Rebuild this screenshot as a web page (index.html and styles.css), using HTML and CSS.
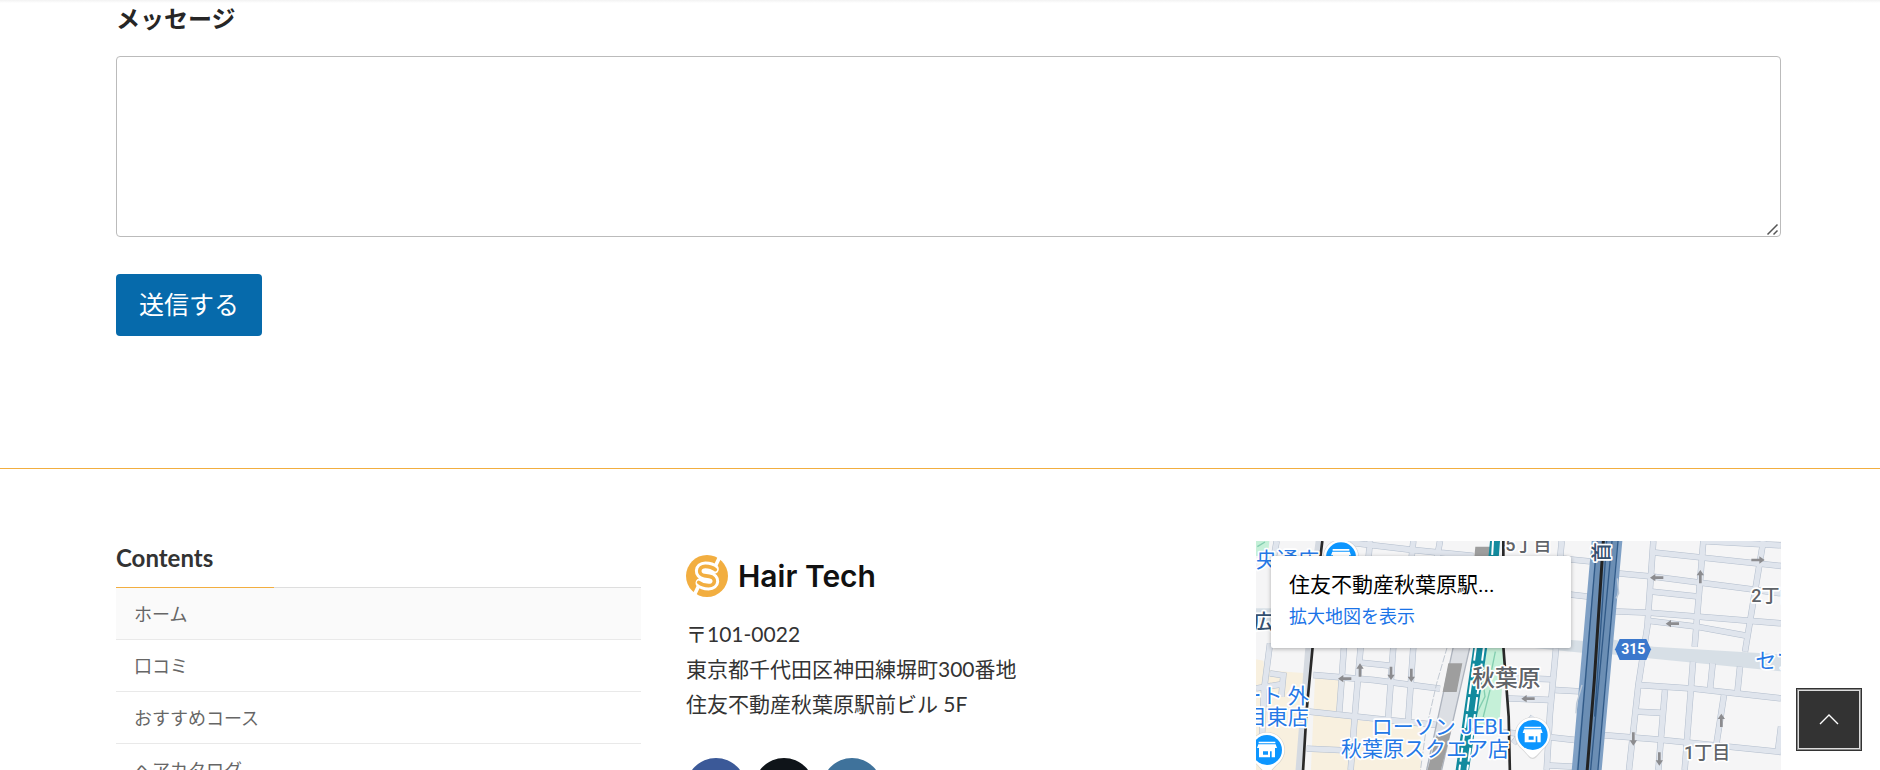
FILE: index.html
```html
<!DOCTYPE html>
<html lang="ja">
<head>
<meta charset="utf-8">
<meta name="viewport" content="width=device-width, initial-scale=1">
<title>Hair Tech</title>
<link rel="stylesheet" href="styles.css">
</head>
<body>
<main class="wrap">
  <form class="contact">
    <label class="contact-label" for="message">メッセージ</label>
    <textarea class="contact-text" id="message" name="message"></textarea>
    <button class="contact-send" type="button">送信する</button>
  </form>
</main>
<footer class="footer">
  <div class="wrap footer-cols">
    <section>
      <h2 class="menu-title">Contents</h2>
      <nav>
        <ul class="menu">
          <li><a class="is-current" href="#">ホーム</a></li>
          <li><a href="#">口コミ</a></li>
          <li><a href="#">おすすめコース</a></li>
          <li><a href="#">ヘアカタログ</a></li>
        </ul>
      </nav>
    </section>
    <section class="about">
      <a class="logo" href="#">
        <svg width="42" height="42" viewBox="0 0 126 126" aria-hidden="true">
          <circle cx="63" cy="63" r="63" fill="#f2ae40"/>
          <g fill="none" stroke-linecap="round" stroke-linejoin="round">
            <path d="M101 6L88 34M38 92L25 120" stroke="#fff" stroke-width="11"/>
            <path d="M84 42C76 34 66 34 58 34C36 34 36 60 55 62L70 64C91 67 90 92 68 92C58 92 48 90 43 84" stroke="#fff" stroke-width="29"/>
            <path d="M88 44C76 34 66 34 58 34C36 34 36 60 55 62L70 64C91 67 90 92 68 92C58 92 48 90 38 82" stroke="#f2ae40" stroke-width="11"/>
          </g>
        </svg>
        <span>Hair Tech</span>
      </a>
      <address class="address">〒101-0022<br>東京都千代田区神田練塀町300番地<br>住友不動産秋葉原駅前ビル 5F</address>
      <div class="social">
        <a class="facebook" href="#" aria-label="Facebook"></a>
        <a class="x" href="#" aria-label="X"></a>
        <a class="instagram" href="#" aria-label="Instagram"></a>
      </div>
    </section>
    <section class="map">
      <svg class="map-art" viewBox="48 33 1575 1200" role="img" aria-label="地図">
        <defs>
          <g id="pin">
            <path d="M0 72 C-12 72 -20 52 -38 38 A54 54 0 1 1 38 38 C20 52 12 72 0 72Z" fill="#bbb" opacity=".5"/>
            <path d="M0 68 C-12 66 -20 50 -37 36 A52 52 0 1 1 37 36 C20 50 12 66 0 68Z" fill="#fff"/>
            <circle r="45" fill="#0d96ff"/>
            <path d="M-25 -25H25V-20H-25ZM-26 -17H26L30 -6H-30ZM-24 -6H24V22H-24ZM-12 4V14H3V4ZM9 4V22H14V4Z" fill="#fff" fill-rule="evenodd"/>
          </g>
          <path id="arrow" d="M-20 0L-4 -11V-4H20V4H-4V11Z" fill="#8c8c8f"/>
          <g id="roads">
            <path d="M110 33L100 90M390 33L385 90M330 38L520 60L700 78M520 33L514 90M600 33L590 90"/>
            <path d="M90 340L72 480L66 620M48 475L130 462M90 430L130 436L124 500"/>
            <path d="M220 435L400 450L600 476M190 543L400 565L560 582L640 590M200 656L335 662"/>
            <path d="M312 350L298 545M362 350L345 550L332 720M460 350L444 570M520 350L504 580M362 398L450 407"/>
            <path d="M965 33L960 90M960 85L1050 94M960 190L1045 200M805 443L940 448M800 505L930 510M946 480L1020 484M780 605L1005 630M920 706L1000 710M880 560L820 640"/>
            <path d="M948 355L930 550L920 720"/>
            <path d="M1240 33L1222 290L1195 465L1167 720M1390 33L1364 350M1359 395L1334 720M1570 33L1515 365M1500 410L1492 490M1418 400L1410 480M1452 495L1428 650M1275 480L1255 720M1623 590L1614 662"/>
            <path d="M1390 33L1623 46M1240 67L1623 108M1135 130L1240 140L1380 158L1520 176L1623 190M1235 185L1370 199M1125 244L1225 248L1623 280M1222 272L1370 290L1518 317"/>
            <path d="M1195 465L1360 476L1623 505M1190 545L1270 549M1085 615L1250 628L1623 666"/>
          </g>
        </defs>
        <rect x="48" y="33" width="1575" height="1200" fill="#f5f5f6"/>
        <path d="M48 388L70 392L74 420L200 430L180 1233H48ZM225 445L315 452L300 560L345 570L545 585L530 1233H190Z" fill="#f8f0df"/>
        <path d="M48 33H88L84 78H48ZM742 350L795 355L778 585H700Z" fill="#c5f0d8"/>
        <path d="M766 365L755 420L730 460L735 500L705 560M750 480L730 560L755 585M52 50L75 36" fill="none" stroke="#83ceb0" stroke-width="4"/>
        <path d="M48 235H100V275H48ZM860 319L1040 334V370L860 352ZM1110 327L1240 350L1623 373V424L1240 386L1105 372Z" fill="#d7dfe6"/>
        <use href="#roads" fill="none" stroke="#b2bdcc" stroke-width="19"/>
        <use href="#roads" fill="none" stroke="#e0e5ed" stroke-width="16"/>
        <path d="M238 33L229 100M208 340L176 740" fill="none" stroke="#d5dae1" stroke-width="22"/>
        <path d="M247 33L240 90M218 350L200 540L188 740M790 33L790 350L806 560L810 740" fill="none" stroke="#292929" stroke-width="8"/>
        <path d="M622 350L590 460L558 600L540 730M648 350L605 520L560 720" fill="none" stroke="#c2c9d2" stroke-width="3" stroke-dasharray="22 5"/>
        <path d="M640 350H690L605 720H560Z" fill="#dcdfe4"/>
        <path d="M690 350L605 720M640 350L560 720" stroke="#aeb4be" stroke-width="4"/>
        <path d="M706 50H750V80H703ZM625 400H667L650 486H608ZM592 608H632L600 730H560Z" fill="#9e9e9e"/>
        <path d="M750 33H780L776 85H745ZM700 350H742L687 720H647Z" fill="#128b9e"/>
        <path d="M759 33L756 85M708 350L658 720M732 350L682 720" stroke="#fff" stroke-width="6" stroke-dasharray="42 9"/>
        <path d="M1055 33H1147L1085 720L1081 780H990Z" fill="#7fa0c5"/>
        <path d="M1070 33H1132L1070 760H1006Z" fill="#6b8eb4"/>
        <path d="M1071 33L1012 740M1100 33L1064 560M1116 33L1050 740M1134 33L1072 740" stroke="#315a88" stroke-width="4" fill="none"/>
        <path d="M1090 33L1063 450L1040 740" stroke="#222" stroke-width="9" fill="none"/>
        <path d="M1132 145L1136 190L1128 205M1026 465L1010 520L1008 550" fill="none" stroke="#bcc9d8" stroke-width="4"/>
        <use href="#arrow" x="314" y="446"/>
        <use href="#arrow" x="864" y="506"/>
        <use href="#arrow" x="1250" y="143"/>
        <use href="#arrow" x="1297" y="281"/>
        <use href="#arrow" transform="translate(360 420) rotate(90)"/>
        <use href="#arrow" transform="translate(453 430) rotate(-90)"/>
        <use href="#arrow" transform="translate(514 436) rotate(-90)"/>
        <use href="#arrow" transform="translate(1554 90) rotate(180)"/>
        <use href="#arrow" transform="translate(1381 140) rotate(90)"/>
        <use href="#arrow" transform="translate(1444 571) rotate(90)"/>
        <use href="#arrow" transform="translate(1180 627) rotate(-90)"/>
        <use href="#arrow" transform="translate(1258 687) rotate(-90)"/>
        <g class="map-area">
          <text x="796" y="63" font-size="54">5丁目</text>
          <text x="1534" y="217" font-size="54">2丁目</text>
          <text x="1332" y="687" font-size="54">1丁目</text>
          <text x="697" y="468" font-size="68">秋葉原</text>
        </g>
        <text class="map-road" x="40" y="298" font-size="60">広</text>
        <text class="map-road" font-size="60" transform="translate(1107 97) rotate(-90)">首</text>
        <g class="map-shop" font-size="63">
          <text x="48" y="112">央通店</text>
          <text x="206" y="518" text-anchor="end">ート 外</text>
          <text x="206" y="583" text-anchor="end">目東店</text>
          <text x="807" y="612" text-anchor="end">ローソン JEBL</text>
          <text x="807" y="677" text-anchor="end">秋葉原スクエア店</text>
          <text x="1546" y="414">セブン</text>
        </g>
        <use href="#pin" x="303" y="82"/>
        <use href="#pin" x="81" y="660"/>
        <use href="#pin" x="878" y="615"/>
        <path d="M1125 358L1139 327H1219L1233 358L1219 390H1139Z" fill="#3b78cc"/>
        <text class="map-route" x="1180" y="373" font-size="42" text-anchor="middle">315</text>
      </svg>
      <div class="map-card">
        <div class="map-place">住友不動産秋葉原駅...</div>
        <a class="map-link" href="#">拡大地図を表示</a>
      </div>
    </section>
  </div>
</footer>
<button class="to-top" type="button" aria-label="ページの先頭へ">
  <svg width="20" height="12" viewBox="0 0 20 12" aria-hidden="true"><path d="M1 10L10 1L19 10" fill="none" stroke="#fff" stroke-width="1.4"/></svg>
</button>
</body>
</html>
```
FILE: styles.css
```css
* {
  box-sizing: border-box;
}

body {
  margin: 0;
  height: 100vh;
  overflow: hidden;
  background: linear-gradient(#f2f2f2, #fff 3px);
  color: #333;
  font-family: Lato, "Noto Sans CJK JP", sans-serif;
  font-size: 21px;
}

a {
  text-decoration: none;
}

.wrap {
  padding: 0 99px 0 116px;
}

.contact {
  display: flex;
  flex-direction: column;
  align-items: flex-start;
  padding-bottom: 132px;
}

.contact-label {
  margin-bottom: 18px;
  color: #262626;
  font-size: 24px;
  font-weight: 700;
  line-height: 38px;
}

.contact-text {
  width: 100%;
  height: 181px;
  margin-bottom: 37px;
  padding: 8px;
  border: 1px solid #bbb;
  border-radius: 4px;
  background: #fff;
  font: inherit;
  resize: vertical;
}

.contact-text::-webkit-resizer {
  background: url("data:image/svg+xml,%3Csvg xmlns='http://www.w3.org/2000/svg' width='15' height='15'%3E%3Cpath d='M2.5 13.5L12.5 3.5M8.500 13.5L12.5 9.5' stroke='%23555' stroke-width='1.5'/%3E%3C/svg%3E") no-repeat;
}

.contact-send {
  height: 62px;
  padding: 0 23px 4px;
  border: 0;
  border-radius: 4px;
  background: #066aab;
  color: #fff;
  font-family: inherit;
  font-size: 25px;
}

.footer {
  border-top: 1px solid #f2ae40;
  padding-top: 72px;
}

.footer-cols {
  display: grid;
  grid-template-columns: repeat(3, 1fr);
  gap: 45px;
}

.menu-title {
  position: relative;
  margin: 0;
  padding-bottom: 12px;
  border-bottom: 1px solid #dedede;
  color: #333;
  font-size: 24px;
  font-weight: 700;
  line-height: 34px;
}

.menu-title::after {
  content: "";
  position: absolute;
  left: 0;
  bottom: -1px;
  width: 30%;
  border-bottom: 1px solid #f2ae40;
}

.menu {
  margin: 0;
  padding: 0;
  list-style: none;
}

.menu a {
  display: block;
  padding: 13px 18px 11px;
  border-bottom: 1px solid #e9e9e9;
  color: #666;
  font-size: 18px;
  line-height: 27px;
}

.menu .is-current {
  background: #fafafa;
}

.about {
  padding-top: 14px;
}

.logo {
  display: flex;
  align-items: center;
  gap: 10px;
  color: #111;
  font-family: Inter, sans-serif;
  font-size: 30px;
  font-weight: 600;
  line-height: 42px;
}

.address {
  margin: 19px 0 37px;
  font-style: normal;
  line-height: 35px;
}

.social {
  display: flex;
  gap: 8px;
}

.social a {
  width: 60px;
  height: 60px;
  border-radius: 50%;
}

.facebook {
  background: #3b5998;
}

.x {
  background: #0f1419;
}

.instagram {
  background: #3f729b;
}

.map {
  position: relative;
}

.map-art {
  display: block;
  width: 100%;
  font-family: Roboto, "Noto Sans CJK JP", sans-serif;
}

.map-art text {
  paint-order: stroke;
  stroke: #fff;
  stroke-width: 10px;
  stroke-linejoin: round;
}

.map-area {
  fill: #5f6368;
  font-weight: 500;
}

.map-art .map-road {
  fill: #34506f;
  font-weight: 500;
}

.map-shop {
  fill: #2578e6;
}

.map-art .map-route {
  fill: #fff;
  stroke: none;
  font-weight: 700;
}

.map-card {
  position: absolute;
  top: 15px;
  left: 15px;
  width: 300px;
  padding: 13px 18px 15px;
  border-radius: 2px;
  background: #fff;
  box-shadow: 0 1px 4px rgba(0, 0, 0, 0.3);
  color: #000;
  font-family: Roboto, "Noto Sans CJK JP", sans-serif;
}

.map-place {
  line-height: 32px;
}

.map-link {
  display: block;
  color: #1a73e8;
  font-size: 18px;
  line-height: 32px;
}

.to-top {
  position: fixed;
  right: 18px;
  bottom: 19px;
  display: flex;
  align-items: center;
  justify-content: center;
  width: 66px;
  height: 63px;
  padding: 0;
  border: 1px solid #333;
  background: #333;
  box-shadow: inset 0 0 0 1px #888, inset 0 0 0 2px #ddd;
}
```
